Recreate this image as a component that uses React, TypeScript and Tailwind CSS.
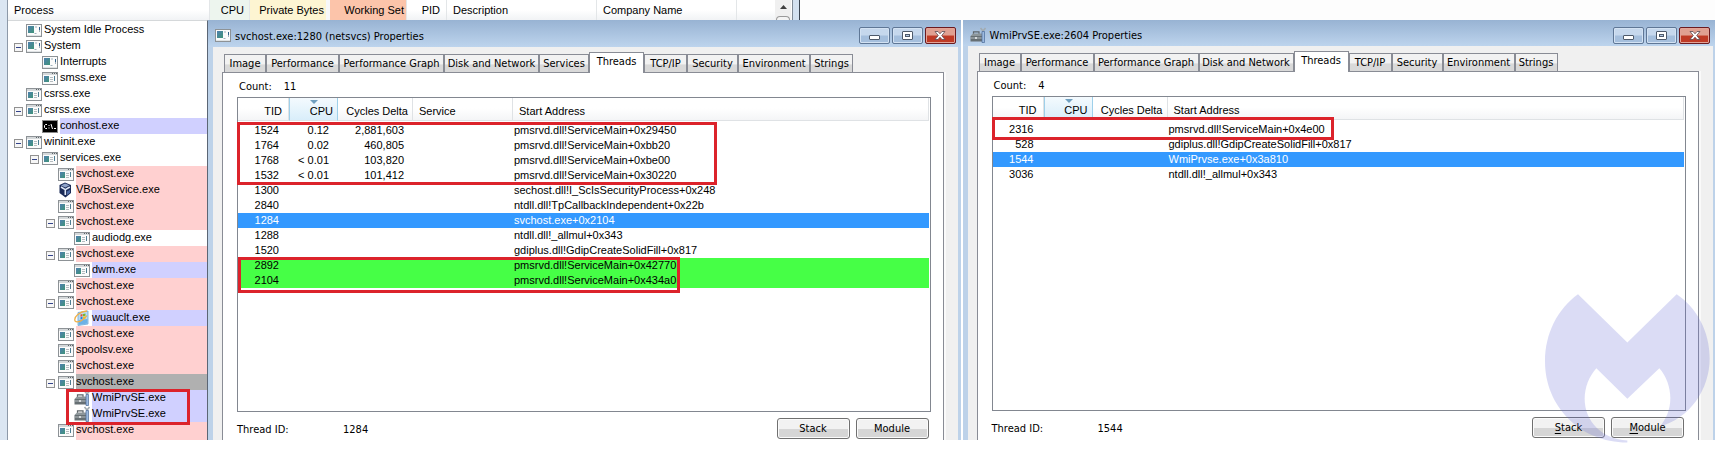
import type { ReactNode } from "react";

const UI = "font-['DejaVu_Sans_Condensed','Noto_Sans',sans-serif]";
const LIST = "font-['Liberation_Sans',Arial,sans-serif]";

type IconKind = "exe" | "sys" | "cmd" | "vbox" | "update" | "tools";
type Tint = "none" | "pink" | "violet" | "grey";

interface Proc {
  name: string;
  level: 0 | 1 | 2 | 3;
  icon: IconKind;
  tint?: Tint;
  open?: boolean;
}

const processes: Proc[] = [
  { name: "System Idle Process", level: 0, icon: "sys" },
  { name: "System", level: 0, icon: "sys", open: true },
  { name: "Interrupts", level: 1, icon: "sys" },
  { name: "smss.exe", level: 1, icon: "exe" },
  { name: "csrss.exe", level: 0, icon: "exe" },
  { name: "csrss.exe", level: 0, icon: "exe", open: true },
  { name: "conhost.exe", level: 1, icon: "cmd", tint: "violet" },
  { name: "wininit.exe", level: 0, icon: "exe", open: true },
  { name: "services.exe", level: 1, icon: "exe", open: true },
  { name: "svchost.exe", level: 2, icon: "exe", tint: "pink" },
  { name: "VBoxService.exe", level: 2, icon: "vbox", tint: "pink" },
  { name: "svchost.exe", level: 2, icon: "exe", tint: "pink" },
  { name: "svchost.exe", level: 2, icon: "exe", tint: "pink", open: true },
  { name: "audiodg.exe", level: 3, icon: "exe" },
  { name: "svchost.exe", level: 2, icon: "exe", tint: "pink", open: true },
  { name: "dwm.exe", level: 3, icon: "exe", tint: "violet" },
  { name: "svchost.exe", level: 2, icon: "exe", tint: "pink" },
  { name: "svchost.exe", level: 2, icon: "exe", tint: "pink", open: true },
  { name: "wuauclt.exe", level: 3, icon: "update", tint: "violet" },
  { name: "svchost.exe", level: 2, icon: "exe", tint: "pink" },
  { name: "spoolsv.exe", level: 2, icon: "exe", tint: "pink" },
  { name: "svchost.exe", level: 2, icon: "exe", tint: "pink" },
  { name: "svchost.exe", level: 2, icon: "exe", tint: "grey", open: true },
  { name: "WmiPrvSE.exe", level: 3, icon: "tools", tint: "violet" },
  { name: "WmiPrvSE.exe", level: 3, icon: "tools", tint: "violet" },
  { name: "svchost.exe", level: 2, icon: "exe", tint: "pink" },
  { name: "", level: 2, icon: "exe", tint: "pink" },
];

const indent = { 0: "pl-1.5", 1: "pl-[22px]", 2: "pl-[38px]", 3: "pl-[54px]" };
const tints: Record<Tint, string> = {
  none: "",
  pink: "bg-[#ffd0d0]",
  violet: "bg-[#d0d0ff]",
  grey: "bg-[#b0b0b0]",
};

function Icon({ kind }: { kind: IconKind }) {
  if (kind === "cmd") {
    return (
      <svg viewBox="0 0 16 14" className="h-3.5 w-4 shrink-0" aria-hidden="true">
        <rect x="0.5" y="1.5" width="15" height="12" fill="#000" stroke="#8a8a8a" />
        <path d="M5 5.5H3.5l-1 1v2l1 1H5M6.5 6.5h1M6.5 9h1M9 5l1.5 5M12 9.5h2" fill="none" stroke="#fff" />
      </svg>
    );
  }
  if (kind === "vbox") {
    return (
      <svg viewBox="0 0 16 16" className="h-4 w-4 shrink-0" aria-hidden="true">
        <path d="M7 0.5 13 3v8L7.5 15.5 1.5 11V3z" fill="#1b2b57" />
        <path d="M7 1.5 11.5 3.3 7.3 5.6 3 3.4z" fill="#8fa3c8" />
        <path d="M3 5l4.3 2.6V13M11.8 5 7.3 7.6" fill="none" stroke="#dfe8f7" strokeWidth="1.6" />
        <path d="M9 9.5l3-1.8v3L9 13z" fill="#4d6ba6" />
      </svg>
    );
  }
  if (kind === "update") {
    return (
      <svg viewBox="0 0 16 16" className="h-4 w-4 shrink-0" aria-hidden="true">
        <path d="M4 2.5l10-1.500v13L4 15.500z" fill="#b9dcf6" stroke="#6aa7d6" strokeWidth=".8" />
        <path d="M4.500 10l9-1v4.500l-9 1.500z" fill="#6cb2e6" />
        <path d="M6.500 4.500l2-.5v2.300l-2 .4z" fill="#e5532f" />
        <path d="M9 3.900l2.500-.5v2.400L9 6.200z" fill="#78b82c" />
        <path d="M6.500 7.200l2-.4v2.300l-2 .4z" fill="#2d7fd4" />
        <path d="M9 6.700l2.500-.4v2.400L9 9.100z" fill="#f5c21c" />
        <path d="M1 11C-.5 6.500 6 1.500 13 1M1 11c2 2 8.500 0 12-5.500" fill="none" stroke="#eeb04a" strokeWidth="1.300" />
      </svg>
    );
  }
  if (kind === "tools") {
    return (
      <svg viewBox="0 0 16 16" className="h-4 w-4 shrink-0" aria-hidden="true">
        <path d="M3.500 7V4.800h5.500V7" fill="none" stroke="#5d6468" strokeWidth="1.200" />
        <path d="M.5 9 3 6.500h10V9z" fill="#8d969a" />
        <path d="M.5 9H12v5.500H.5z" fill="#666f73" />
        <path d="M.5 11H12" stroke="#b4bcc0" />
        <path d="M5 10h2v2H5z" fill="#d5dadc" />
        <path d="M10.500 1l2.500 3L15.500 1" fill="none" stroke="#a2abb0" strokeWidth="1.600" />
        <path d="M12 4.500h2.500v11H12z" fill="#9dbbe0" stroke="#4a6a98" strokeWidth=".7" />
      </svg>
    );
  }
  return (
    <svg viewBox="0 0 16 13" className="h-[13px] w-4 shrink-0" aria-hidden="true">
      <defs>
        <linearGradient id="pane" x1="0" y1="0" x2="1" y2="1">
          <stop offset="0" stopColor="#4f7fb0" />
          <stop offset="1" stopColor="#3f9478" />
        </linearGradient>
      </defs>
      <rect x="0.5" y="0.5" width="15" height="12" fill="#fbfbfb" stroke="#8d9296" />
      {kind === "sys" ? (
        <>
          <rect x="2" y="2" width="6" height="7" fill="url(#pane)" />
          <path d="M8.500 9.500h2M13.500 3v5M9 3h2" stroke="#9fb0bb" />
          <path d="M13.500 3v3" stroke="#31618a" />
          <path d="M1 11.500h14" stroke="#dfe3e5" />
        </>
      ) : (
        <>
          <path d="M1 2h14" stroke="#d4d8da" strokeWidth="2" />
          <path d="M10 1.500h1M12 1.500h1M14 1.500h1" stroke="#5d6468" />
          <rect x="2" y="4" width="5" height="6" fill="url(#pane)" />
          <path d="M8 5.500h3M8 7.500h3M8 9.500h3" stroke="#b5bcc0" />
          <path d="M12.500 4v5" stroke="#4c7d92" />
        </>
      )}
    </svg>
  );
}

function ColumnHeads() {
  const base = "flex shrink-0 items-center border-r border-[#e3e6e8] leading-5";
  return (
    <div className={`flex h-5 shrink-0 text-[11px] text-black ${LIST}`}>
      <div className="w-2 shrink-0 border-r border-[#8d99a8] bg-[#dbe6f2]" />
      <div className="flex w-[792px] shrink-0 bg-linear-to-b from-white from-50% to-[#f1f3f5]">
        <div className={`${base} w-[202px] pl-1.5`}>Process</div>
        <div className={`${base} w-10 justify-end bg-[#edf5ee] pr-[5px]`}>CPU</div>
        <div className={`${base} w-20 justify-end border-r-4 border-r-[#f7f8f9] bg-[#fdf5d2] pr-0.5`}>Private Bytes</div>
        <div className={`${base} w-[77px] justify-end bg-[#fcc4aa] pr-0.5`}>Working Set</div>
        <div className={`${base} w-10 justify-end pr-1.5`}>PID</div>
        <div className={`${base} w-[150px] pl-1.5`}>Description</div>
        <div className={`${base} w-[140px] pl-1.5`}>Company Name</div>
        <div className="grow" />
        <div className="flex w-4 shrink-0 flex-col items-center justify-between bg-[#f0f0f0] pt-[5px]">
          <svg viewBox="0 0 7 4" className="h-1 w-[7px]" aria-hidden="true">
            <path d="M0 4 3.500 0 7 4z" fill="#404040" />
          </svg>
          <div className="h-1 w-3.5 rounded-t-sm border border-b-0 border-[#9a9a9a] bg-[#f4f4f4]" />
        </div>
        <div className="ml-px w-2 shrink-0 border-r border-l border-l-[#7f8a96] border-r-[#3c4652] bg-[#d3e1f0]" />
      </div>
      <div className="grow bg-[#fdfdfd]" />
    </div>
  );
}

function ProcessTree() {
  return (
    <div className="flex w-52 shrink-0 overflow-hidden bg-white">
      <div className="w-2 shrink-0 border-r border-[#8d99a8] bg-[#dbe6f2]" />
      <div className="relative min-w-0 grow border-t border-r border-t-[#d5d8da] border-r-[#5b6675]">
        <ul className={`mt-px text-[11px] leading-[14px] text-black ${LIST}`}>
          {processes.map((p, i) => (
            <li key={i} className={`flex h-4 items-center ${indent[p.level]}`}>
              {p.open ? (
                <button
                  type="button"
                  aria-label={`Collapse ${p.name}`}
                  className="mt-0.5 mr-[3px] flex size-[9px] shrink-0 items-center justify-center border border-[#919191] bg-[#f6f6f6]"
                >
                  <span className="h-px w-[5px] bg-[#33438a]" />
                </button>
              ) : (
                <span className="mr-[3px] w-[9px] shrink-0" />
              )}
              <Icon kind={p.icon} />
              <span className={`ml-0.5 h-4 grow ${tints[p.tint ?? "none"]}`}>{p.name}</span>
            </li>
          ))}
        </ul>
        <div className="absolute top-[368px] left-[58px] h-9 w-[124px] border-3 border-[#dc232b]" />
      </div>
    </div>
  );
}

interface Thread {
  tid: string;
  cpu?: string;
  cycles?: string;
  address: string;
  tone?: "selected" | "fresh";
}

const svchostThreads: Thread[] = [
  { tid: "1524", cpu: "0.12", cycles: "2,881,603", address: "pmsrvd.dll!ServiceMain+0x29450" },
  { tid: "1764", cpu: "0.02", cycles: "460,805", address: "pmsrvd.dll!ServiceMain+0xbb20" },
  { tid: "1768", cpu: "< 0.01", cycles: "103,820", address: "pmsrvd.dll!ServiceMain+0xbe00" },
  { tid: "1532", cpu: "< 0.01", cycles: "101,412", address: "pmsrvd.dll!ServiceMain+0x30220" },
  { tid: "1300", address: "sechost.dll!I_ScIsSecurityProcess+0x248" },
  { tid: "2840", address: "ntdll.dll!TpCallbackIndependent+0x22b" },
  { tid: "1284", address: "svchost.exe+0x2104", tone: "selected" },
  { tid: "1288", address: "ntdll.dll!_allmul+0x343" },
  { tid: "1520", address: "gdiplus.dll!GdipCreateSolidFill+0x817" },
  { tid: "2892", address: "pmsrvd.dll!ServiceMain+0x42770", tone: "fresh" },
  { tid: "2104", address: "pmsrvd.dll!ServiceMain+0x434a0", tone: "fresh" },
];

const wmiThreads: Thread[] = [
  { tid: "2316", address: "pmsrvd.dll!ServiceMain+0x4e00" },
  { tid: "528", address: "gdiplus.dll!GdipCreateSolidFill+0x817" },
  { tid: "1544", address: "WmiPrvse.exe+0x3a810", tone: "selected" },
  { tid: "3036", address: "ntdll.dll!_allmul+0x343" },
];

const tabWidths: Record<string, string> = {
  Image: "w-[42px]",
  Performance: "w-[73px]",
  "Performance Graph": "w-[105px]",
  "Disk and Network": "w-[95px]",
  Services: "w-[50px]",
  Threads: "w-[55px]",
  "TCP/IP": "w-[43px]",
  Security: "w-[51px]",
  Environment: "w-[72px]",
  Strings: "w-[43px]",
};

function ThreadTable({ threads, service }: { threads: Thread[]; service: boolean }) {
  const head = "h-[23px] border-r border-b border-[#dfe2e5] p-0 pt-1 font-normal whitespace-nowrap";
  return (
    <table className={`w-full table-fixed border-separate border-spacing-0 text-[11px] leading-[15px] ${LIST}`}>
      <colgroup>
        <col className="w-[51px]" />
        <col className="w-[49px]" />
        <col className="w-[75px]" />
        {service && <col className="w-[100px]" />}
        <col />
      </colgroup>
      <thead>
        <tr className="bg-linear-to-b from-white from-45% to-[#f3f4f6]">
          <th className={`${head} pr-1.5 text-right`}>TID</th>
          <th className={`${head} relative border-x border-x-[#9ed0ea] bg-linear-to-b from-[#f4fafe] to-[#d9eefa] pr-1 text-right`}>
            CPU
            <svg viewBox="0 0 8 4" className="absolute top-0.5 left-5 h-1 w-2" aria-hidden="true">
              <path d="M0 0h8L4 4z" fill="#6f9fbf" />
            </svg>
          </th>
          <th className={`${head} pr-1 text-right`}>Cycles Delta</th>
          {service && <th className={`${head} pl-1.5 text-left`}>Service</th>}
          <th className={`${head} pl-1.5 text-left`}>Start Address</th>
        </tr>
      </thead>
      <tbody>
        <tr aria-hidden="true">
          <td className="h-0.5 p-0" colSpan={service ? 5 : 4} />
        </tr>
        {threads.map((t) => (
          <tr
            key={t.tid}
            className={
              t.tone === "selected" ? "bg-[#3399ff] text-white" : t.tone === "fresh" ? "bg-[#46ff46] text-black" : "text-black"
            }
          >
            <td className="h-[15px] p-0 pr-2.5 text-right">{t.tid}</td>
            <td className="p-0 pr-[9px] text-right">{t.cpu}</td>
            <td className="p-0 pr-[9px] text-right">{t.cycles}</td>
            {service && <td className="p-0" />}
            <td className="p-0 pl-px whitespace-nowrap">{t.address}</td>
          </tr>
        ))}
      </tbody>
    </table>
  );
}

function CaptionButtons() {
  const box = "flex h-[17px] w-[31px] items-center justify-center rounded-xs border";
  const blue = "border-[#5f7796] bg-linear-to-b from-[#c6d8ed] from-45% to-[#a5bfdd] to-55% shadow-[inset_0_0_0_1px_#d3e2f3]";
  return (
    <div className="flex gap-0.5">
      <button type="button" aria-label="Minimize" className={`${box} ${blue}`}>
        <svg viewBox="0 0 11 9" className="h-[9px] w-[11px]" aria-hidden="true">
          <rect x=".5" y="4.500" width="10" height="4" rx=".5" fill="#fff" stroke="#4e5a6b" />
        </svg>
      </button>
      <button type="button" aria-label="Maximize" className={`${box} ${blue}`}>
        <svg viewBox="0 0 11 9" className="h-[9px] w-[11px]" aria-hidden="true">
          <rect x=".5" y=".5" width="10" height="8" rx=".5" fill="#fff" stroke="#4e5a6b" />
          <rect x="3.500" y="3.500" width="4" height="2" fill="#b5cae4" stroke="#4e5a6b" />
        </svg>
      </button>
      <button
        type="button"
        aria-label="Close"
        className={`${box} border-[#6b1a1f] bg-linear-to-b from-[#e0a091] from-45% to-[#bf3a25] to-55% shadow-[inset_0_0_0_1px_#e3a397]`}
      >
        <svg viewBox="0 0 12 9" className="h-[9px] w-3" aria-hidden="true">
          <path d="M1 .5h3L6 2.800 8 .5h3L7.700 4.500 11 8.500H8L6 6.200 4 8.500H1l3.300-4z" fill="#fff" stroke="#5c4a50" strokeWidth=".8" />
        </svg>
      </button>
    </div>
  );
}

interface DialogProps {
  title: string;
  icon: ReactNode;
  tabs: string[];
  count: string;
  threads: Thread[];
  service: boolean;
  threadId: string;
  accessKeys: boolean;
  barClass: string;
  footClass: string;
  frameClass: string;
  children: ReactNode;
}

function ActionButton({ label, accessKey }: { label: string; accessKey: boolean }) {
  return (
    <button
      type="button"
      className="h-[21px] w-[73px] rounded-[3px] border border-[#707070] bg-linear-to-b from-[#f2f2f2] from-50% to-[#d6d6d6] to-55% text-center leading-5 shadow-[inset_0_0_0_1px_#fbfbfb]"
    >
      {accessKey ? (
        <>
          <u className="underline-offset-2">{label[0]}</u>
          {label.slice(1)}
        </>
      ) : (
        label
      )}
    </button>
  );
}

function PropertiesDialog(p: DialogProps) {
  return (
    <section className={`flex min-w-0 grow basis-0 flex-col text-[11px] text-black ${UI}`}>
      <header
        className={`flex shrink-0 items-center justify-between bg-linear-to-b from-[#98b3d3] to-[#bdd4ed] pt-1 pr-[5px] pl-[7px] ${p.barClass}`}
      >
        <div className="flex items-center gap-1">
          {p.icon}
          <h2 className="pt-0.5 leading-4 whitespace-nowrap">{p.title}</h2>
        </div>
        <CaptionButtons />
      </header>
      <div className={`flex min-h-0 grow flex-col border-l-5 border-[#bdd2e9] bg-[#f0f0f0] pr-3 pl-[9px] ${p.frameClass}`}>
        <div role="tablist" className="flex h-[25px] shrink-0 items-end pl-0.5">
          {p.tabs.map((t) => (
            <button
              key={t}
              type="button"
              role="tab"
              aria-selected={t === "Threads"}
              className={`${tabWidths[t]} shrink-0 border border-b-0 border-[#898c95] text-center whitespace-nowrap ${
                t === "Threads"
                  ? "relative z-10 -mb-px h-[21px] bg-white pb-0.5 leading-4"
                  : "h-[18px] bg-linear-to-b from-[#f2f2f2] from-50% to-[#d9d9d9] to-60% leading-[18px]"
              }`}
            >
              {t}
            </button>
          ))}
        </div>
        <div className="mr-0.5 flex min-h-0 grow flex-col border border-b-0 border-[#898c95] bg-white pr-3 pl-3.5 shadow-[2px_0_0_#fafafa]">
          <p className="flex h-6 shrink-0 items-center gap-3 pt-1 pl-0.5 leading-4">
            <span>Count:</span>
            <span>{p.count}</span>
          </p>
          <div className="relative min-h-0 grow border border-[#828790] bg-white pr-px">
            <ThreadTable threads={p.threads} service={p.service} />
            {p.children}
          </div>
          <div className={`flex shrink-0 items-start pt-1.5 ${p.footClass}`}>
            <span className="w-[106px] leading-[23px]">Thread ID:</span>
            <span className="grow leading-[23px]">{p.threadId}</span>
            <div className="flex gap-1.5 pr-0.5">
              <ActionButton label="Stack" accessKey={p.accessKeys} />
              <ActionButton label="Module" accessKey={p.accessKeys} />
            </div>
          </div>
        </div>
      </div>
    </section>
  );
}

function Watermark() {
  return (
    <svg
      viewBox="136 43 495 446"
      className="pointer-events-none absolute right-[5px] bottom-1.5 z-20 h-[149px] w-[165px]"
      aria-hidden="true"
    >
      <path
        d="M235 43 383 188 531 43C592 84 630 155 630 235c0 95-60 180-150 205 20-22 32-52 32-85 0-34-12-66-33-90L383 357 290 265c-22 25-35 57-35 92 0 70 55 122 128 125v6C240 488 136 378 136 245 136 160 174 87 235 43z"
        fill="#6468d4"
        fillOpacity=".23"
      />
    </svg>
  );
}

const allTabs = Object.keys(tabWidths);

export default function App() {
  return (
    <main className="relative flex h-screen flex-col overflow-hidden bg-white pb-[9px]">
      <ColumnHeads />
      <div className="flex min-h-0 grow">
        <ProcessTree />
        <PropertiesDialog
          title="svchost.exe:1280 (netsvcs) Properties"
          icon={<Icon kind="sys" />}
          tabs={allTabs}
          count="11"
          threads={svchostThreads}
          service
          threadId="1284"
          accessKeys={false}
          barClass="h-[27px]"
          footClass="h-7"
          frameClass="border-r-3"
        >
          <div className="absolute top-6 -left-px h-[63px] w-[480px] border-3 border-[#dc232b]" />
          <div className="absolute top-[159px] left-0 h-9 w-[442px] border-3 border-[#dc232b]" />
        </PropertiesDialog>
        <div className="w-0.5 shrink-0 bg-white" />
        <PropertiesDialog
          title="WmiPrvSE.exe:2604 Properties"
          icon={<Icon kind="tools" />}
          tabs={allTabs.filter((t) => t !== "Services")}
          count="4"
          threads={wmiThreads}
          service={false}
          threadId="1544"
          accessKeys
          barClass="h-[26px]"
          footClass="h-[29px]"
          frameClass="border-r-2"
        >
          <div className="absolute top-5 -left-px h-[23px] w-[342px] border-3 border-[#dc232b]" />
        </PropertiesDialog>
      </div>
      <Watermark />
    </main>
  );
}
